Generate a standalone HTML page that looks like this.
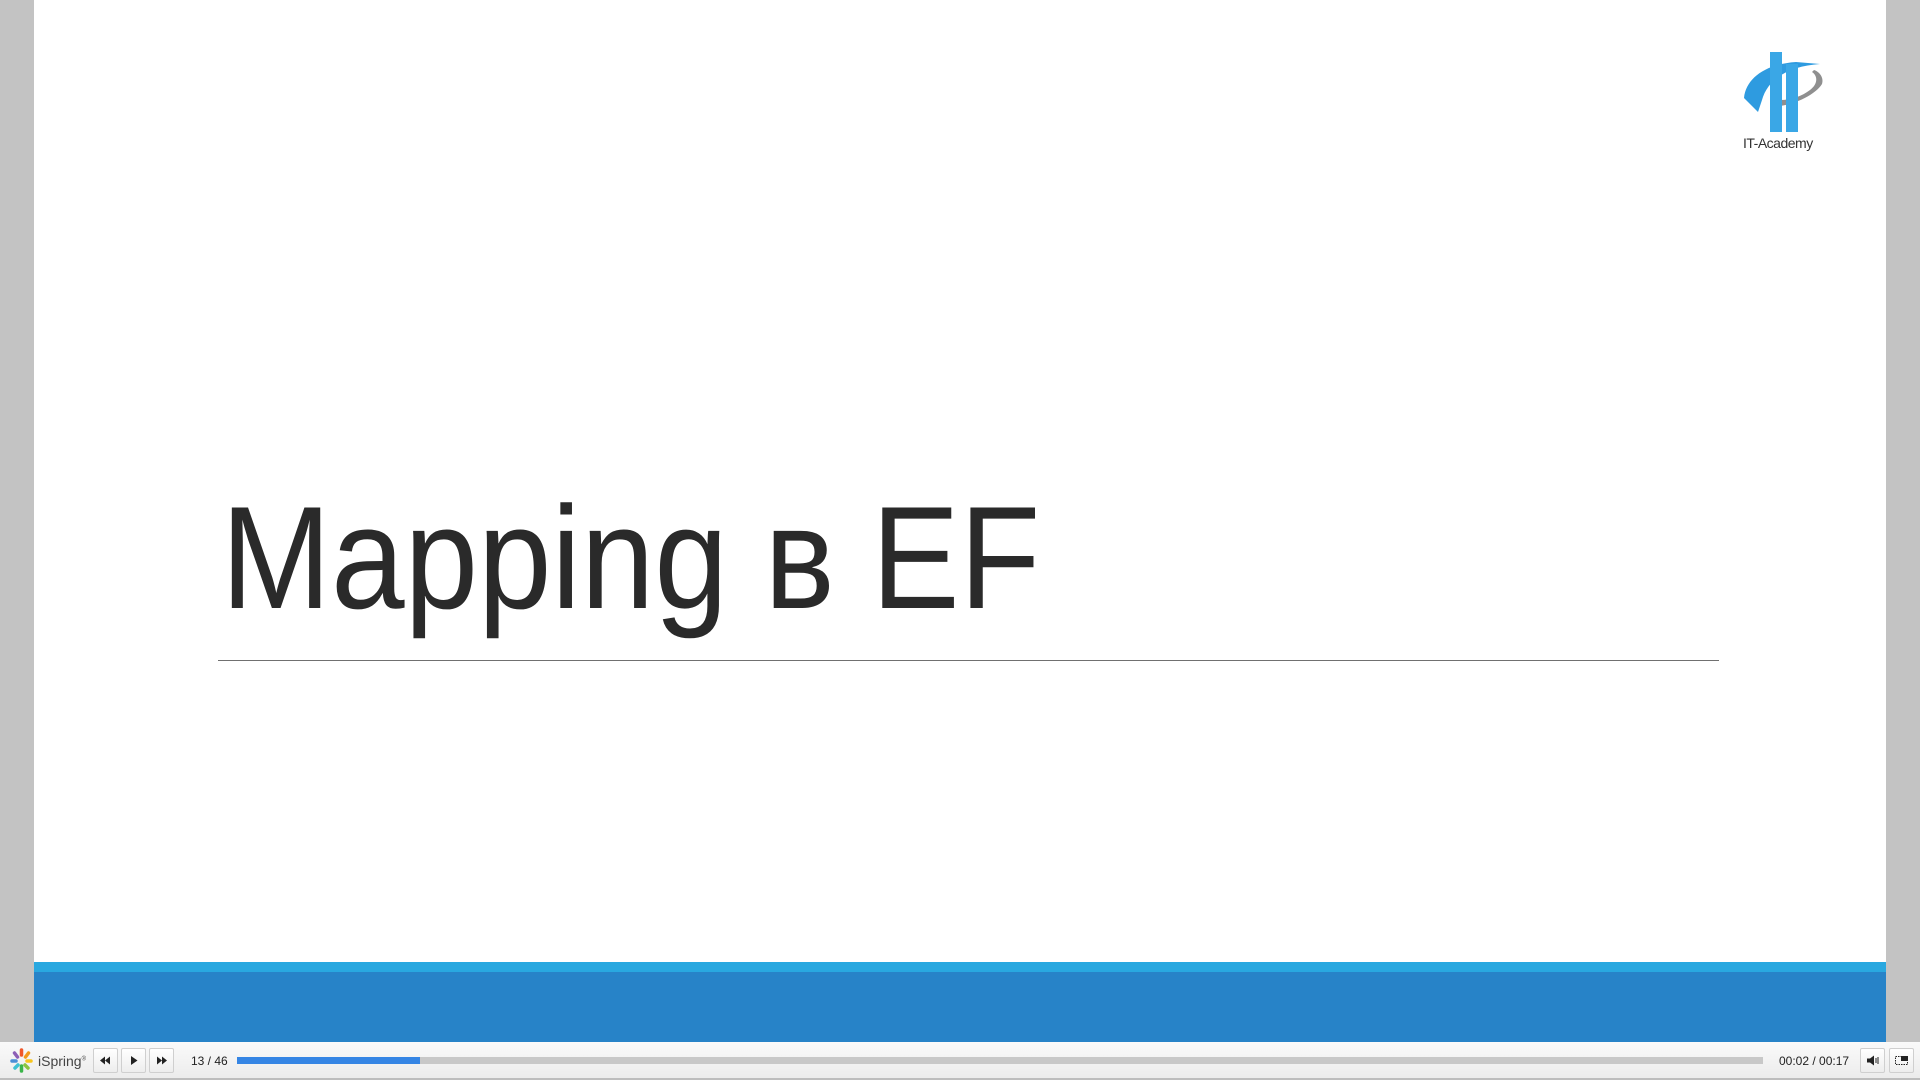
<!DOCTYPE html>
<html><head><meta charset="utf-8"><style>
html,body{margin:0;padding:0;width:1920px;height:1080px;overflow:hidden;background:#c3c3c3;font-family:"Liberation Sans",sans-serif}
.slide{position:absolute;left:34px;top:0;width:1852px;height:1042px;background:#fff}
.s1{position:absolute;left:34px;top:962px;width:1852px;height:10px;background:#29a8e0}
.s2{position:absolute;left:34px;top:972px;width:1852px;height:70px;background:#2783c8}
.title{position:absolute;left:221px;top:485px;font-size:146px;line-height:146px;color:#2a2a2a;white-space:nowrap;transform:scaleX(0.905);transform-origin:0 0;font-weight:300}
.line{position:absolute;left:218px;top:660px;width:1501px;height:1px;background:#707070}
.bar{position:absolute;left:0;top:1042px;width:1920px;height:36px;background:linear-gradient(#fafafa,#ececec);border-bottom:2px solid #bdbdbd}
.btn{position:absolute;top:1048px;width:23px;height:23px;border:1px solid #cfcfcf;border-radius:2px;background:linear-gradient(#fff,#ededed)}
.btn svg{position:absolute;left:0;top:0}
.txt{position:absolute;font-size:12px;color:#222}
</style></head><body>
<div class="slide"></div>
<div class="s1"></div><div class="s2"></div>
<div class="title">Mapping в EF</div>
<div class="line"></div>
<svg style="position:absolute;left:1740px;top:48px" width="90" height="110" viewBox="0 0 90 110">
<path d="M40 58 C56 56 76 46 82 36 C84 30 80 24 74 22 L72 24 C78 28 78 36 70 42 C62 48 52 52 40 52 Z" fill="#8f8f8f"/>
<path d="M4 50 C6 30 26 16 56 14 L80 16 C50 18 28 30 22 52 L18 64 Z" fill="#2e9be0"/>
<rect x="30" y="4" width="12" height="80" fill="#3aa7e6"/>
<rect x="46" y="16" width="12" height="68" fill="#3aa7e6"/>
<text x="3" y="100" font-family="Liberation Sans" font-size="14" fill="#333" letter-spacing="-0.5">IT-Academy</text>
</svg>
<div class="bar"></div>
<svg style="position:absolute;left:9px;top:1048px" width="25" height="25" viewBox="0 0 25 25">
<g stroke-width="3.5" stroke-linecap="round">
<line x1="12.5" y1="2" x2="12.5" y2="7" stroke="#f0572a"/>
<line x1="19.5" y1="5" x2="16.5" y2="9" stroke="#f39a1d"/>
<line x1="22" y1="13" x2="18" y2="13" stroke="#f7c51c"/>
<line x1="19" y1="20" x2="16" y2="17" stroke="#8bc43f"/>
<line x1="12.5" y1="23" x2="12.5" y2="18" stroke="#3bb54a"/>
<line x1="6" y1="20" x2="9" y2="17" stroke="#3ec1d3"/>
<line x1="3" y1="13" x2="7" y2="13" stroke="#4a8ed6"/>
<line x1="5.5" y1="5" x2="8.5" y2="9" stroke="#8d5fb6"/>
</g></svg>
<div class="txt" style="left:38px;top:1053px;font-size:14px;color:#444">iSpring<sup style="font-size:6px">®</sup></div>
<div class="btn" style="left:93px"><svg width="23" height="23"><path d="M6 11.5 L11 7.5 V15.5Z M11 11.5 L16 7.5 V15.5Z" fill="#222"/></svg></div>
<div class="btn" style="left:121px"><svg width="23" height="23"><path d="M9 7 L15.5 11.5 L9 16Z" fill="#222"/></svg></div>
<div class="btn" style="left:149px"><svg width="23" height="23"><path d="M7 7.5 L12 11.5 L7 15.5Z M12 7.5 L17 11.5 L12 15.5Z" fill="#222"/></svg></div>
<div class="txt" style="left:191px;top:1054px">13 / 46</div>
<div style="position:absolute;left:237px;top:1057px;width:1526px;height:7px;background:#c8c8c8"></div>
<div style="position:absolute;left:237px;top:1057px;width:183px;height:7px;background:#3585e4"></div>
<div class="txt" style="left:1779px;top:1054px">00:02 / 00:17</div>
<div class="btn" style="left:1860px"><svg width="23" height="23"><path d="M6 9.5h3l4-3v10l-4-3H6Z" fill="#222"/><path d="M15 9v5M17 8v7" stroke="#222" stroke-width="1"/></svg></div>
<div class="btn" style="left:1889px"><svg width="23" height="23"><rect x="5.5" y="7.5" width="12" height="8" fill="none" stroke="#222" stroke-dasharray="1.5 1"/><rect x="11" y="7" width="7" height="5" fill="#222"/></svg></div>
</body></html>
